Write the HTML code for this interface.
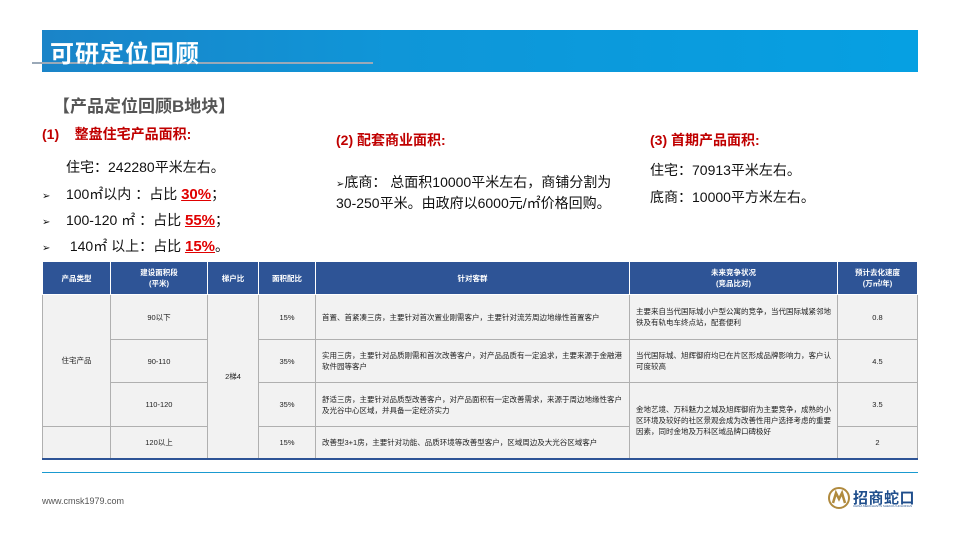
<!DOCTYPE html>
<html><head><meta charset="utf-8"><style>
*{margin:0;padding:0;box-sizing:border-box}
body{width:960px;height:540px;background:#fff;position:relative;overflow:hidden;font-family:"Liberation Sans","Noto Sans CJK SC",sans-serif;color:#111}
.a{position:absolute;white-space:nowrap}
.banner{left:42px;top:30px;width:876px;height:42px;background:linear-gradient(90deg,#1a84c8 0%,#0f96d8 40%,#06a0e2 100%)}
.gl{left:32px;top:62px;width:341px;height:2px;background:#9aa9b8}
.title{left:50px;top:34px;font-size:24px;font-weight:bold;color:#fff;letter-spacing:1px}
.red{color:#c00000;font-weight:bold;font-size:14px}
.t{font-size:14px;color:#111}
.u{color:#e00000;font-weight:bold;text-decoration:underline;font-size:15px}
table{position:absolute;left:42px;top:261px;width:875px;border-collapse:collapse;font-size:7.5px;table-layout:fixed;color:#222}
td,th{border:1px solid #b0b0b0;text-align:center;vertical-align:middle;background:#f2f2f2}
th{background:#2e5496;color:#fff;height:33px;font-weight:bold;border-color:#fff}
td.l{text-align:left;padding:0 6px;line-height:11px}
table{border-bottom:2px solid #2e5496}
</style></head><body>
<div class="a banner"></div>
<div class="a gl"></div>
<div class="a title">可研定位回顾</div>
<div class="a" style="left:53px;top:92px;font-size:17px;font-weight:bold;color:#555">【产品定位回顾B地块】</div>
<div class="a red" style="left:42px;top:124px">(1)&nbsp;&nbsp;&nbsp;&nbsp;整盘住宅产品面积:</div>
<div class="a t" style="left:66px;top:157px">住宅：242280平米左右。</div>
<div class="a t" style="left:42px;top:184px"><span style="font-size:10px">➢</span>&nbsp;&nbsp;&nbsp;&nbsp;100㎡以内 ：占比 <span class="u">30%</span>；</div>
<div class="a t" style="left:42px;top:210px"><span style="font-size:10px">➢</span>&nbsp;&nbsp;&nbsp;&nbsp;100-120 ㎡ ：占比 <span class="u">55%</span>；</div>
<div class="a t" style="left:42px;top:236px"><span style="font-size:10px">➢</span>&nbsp;&nbsp;&nbsp;&nbsp;&nbsp;140㎡ 以上：占比 <span class="u">15%</span>。</div>
<div class="a red" style="left:336px;top:130px">(2) 配套商业面积:</div>
<div class="a t" style="left:336px;top:173px;line-height:18px"><span style="font-size:10px">➢</span>底商： 总面积10000平米左右，商铺分割为<br>30-250平米。由政府以6000元/㎡价格回购。</div>
<div class="a red" style="left:650px;top:130px">(3) 首期产品面积:</div>
<div class="a t" style="left:650px;top:160px">住宅：70913平米左右。</div>
<div class="a t" style="left:650px;top:187px">底商：10000平方米左右。</div>
<table>
<colgroup><col style="width:68px"><col style="width:97px"><col style="width:51px"><col style="width:57px"><col style="width:314px"><col style="width:208px"><col style="width:80px"></colgroup>
<tr><th>产品类型</th><th>建设面积段<br>(平米)</th><th>梯户比</th><th>面积配比</th><th>针对客群</th><th>未来竞争状况<br>(竞品比对)</th><th>预计去化速度<br>(万㎡/年)</th></tr>
<tr style="height:45px"><td rowspan="3" style="border-bottom:none">住宅产品</td><td>90以下</td><td rowspan="4">2梯4</td><td>15%</td><td class="l">首置、首紧凑三房，主要针对首次置业刚需客户，主要针对流芳周边地缘性首置客户</td><td class="l">主要来自当代国际城小户型公寓的竞争，当代国际城紧邻地铁及有轨电车终点站，配套便利</td><td>0.8</td></tr>
<tr style="height:43px"><td>90-110</td><td>35%</td><td class="l">实用三房，主要针对品质刚需和首次改善客户，对产品品质有一定追求，主要来源于金融港软件园等客户</td><td class="l">当代国际城、旭辉御府均已在片区形成品牌影响力，客户认可度较高</td><td>4.5</td></tr>
<tr style="height:44px"><td>110-120</td><td>35%</td><td class="l">舒适三房，主要针对品质型改善客户，对产品面积有一定改善需求，来源于周边地缘性客户及光谷中心区域，并具备一定经济实力</td><td class="l" rowspan="2">金地艺境、万科魅力之城及旭辉御府为主要竞争，成熟的小区环境及较好的社区景观会成为改善性用户选择考虑的重要因素，同时金地及万科区域品牌口碑极好</td><td>3.5</td></tr>
<tr style="height:32px"><td></td><td>120以上</td><td>15%</td><td class="l">改善型3+1房，主要针对功能、品质环境等改善型客户，区域周边及大光谷区域客户</td><td>2</td></tr>
</table>
<div class="a" style="left:42px;top:472px;width:876px;height:1px;background:#1a9ad0"></div>
<div class="a" style="left:42px;top:496px;font-size:9px;color:#555">www.cmsk1979.com</div>
<svg class="a" style="left:828px;top:487px" width="22" height="22" viewBox="0 0 22 22"><circle cx="11" cy="11" r="10" fill="none" stroke="#b08a3e" stroke-width="2"/><path d="M5 16 L8 6 L11 12 L14 6 L17 16" fill="none" stroke="#b08a3e" stroke-width="2.5"/></svg>
<div class="a" style="left:853px;top:487px;font-size:15px;font-weight:bold;color:#1f4e8c;letter-spacing:0.5px">招商蛇口</div>
<div class="a" style="left:853px;top:504px;font-size:3px;color:#1f4e8c">CHINA MERCHANTS SHEKOU HOLDINGS</div>
</body></html>
